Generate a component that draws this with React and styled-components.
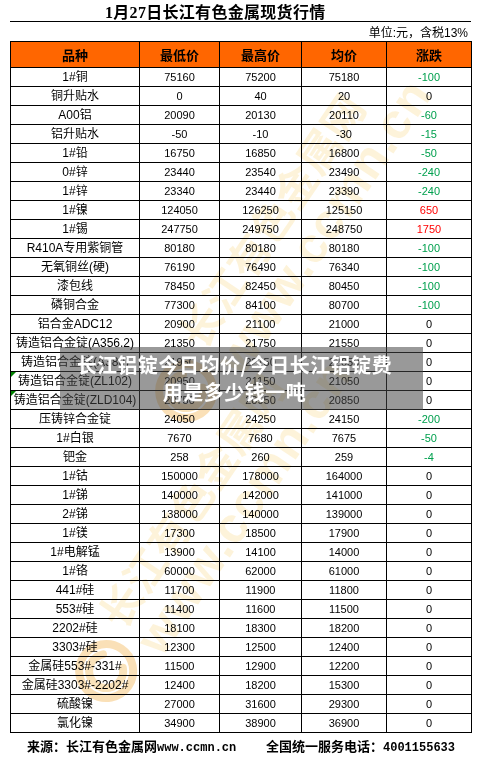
import styled, { createGlobalStyle } from 'styled-components';

const GlobalStyle = createGlobalStyle`
	html, body {
		margin: 0;
		padding: 0;
		background: #fff;
	}
	body {
		font-family: "Liberation Sans", "Noto Sans CJK SC", sans-serif;
		color: #000;
	}
`;

const Page = styled.div`
	position: relative;
	width: 485px;
	height: 757px;
	overflow: hidden;
	background: #fff;
`;

const Sheet = styled.div`
	display: flex;
	flex-direction: column;
	width: 461px;
	margin-left: 10px;
`;

const TitleBar = styled.div`
	display: flex;
	align-items: center;
	height: 21px;
	padding-left: 95px;
	border-bottom: 1px solid #000;
	font-family: "Liberation Serif", "Noto Sans CJK SC", serif;
	font-size: 16px;
	font-weight: 700;
	letter-spacing: 0.3px;
`;

const UnitRow = styled.div`
	display: flex;
	align-items: center;
	justify-content: flex-end;
	height: 19px;
	padding-right: 3px;
	font-size: 12px;
`;

const Table = styled.table`
	width: 461px;
	border-collapse: collapse;
	table-layout: fixed;
`;

const HeadCell = styled.th`
	height: 25px;
	padding: 0;
	border: 1px solid #000;
	background: #ff6600;
	font-family: "Noto Sans CJK SC", sans-serif;
	font-size: 13px;
	font-weight: 700;
`;

const Row = styled.tr`
	height: 19px;
`;

const Cell = styled.td`
	position: relative;
	padding: 0;
	border: 1px solid #000;
	text-align: center;
	white-space: nowrap;
	line-height: 17px;
	font-size: ${props => (props.$name ? '12px' : '11px')};
	color: ${props => props.$tone || '#000'};

	${props =>
		props.$marked &&
		`
		&::before {
			content: '';
			position: absolute;
			left: 0;
			top: 0;
			border-top: 5px solid #008000;
			border-right: 5px solid transparent;
		}
	`}
`;

const Footer = styled.div`
	display: flex;
	align-items: center;
	height: 24px;
	padding: 0 16px 0 17px;
	font-family: "Noto Sans CJK SC", sans-serif;
	font-size: 13px;
	font-weight: 700;
`;

const FooterPart = styled.span`
	display: flex;
	align-items: baseline;
	margin-left: ${props => (props.$right ? 'auto' : '0')};
`;

const Mono = styled.span`
	font-family: "Liberation Mono", monospace;
	font-size: 12px;
	font-weight: 700;
`;

const Watermark = styled.div`
	position: absolute;
	left: ${props => props.$x}px;
	top: ${props => props.$y}px;
	display: flex;
	align-items: center;
	gap: 10px;
	transform: translate(-50%, -50%) rotate(-56deg);
	pointer-events: none;
	mix-blend-mode: multiply;
	color: rgba(248, 206, 100, 0.24);
`;

const MarkText = styled.div`
	display: flex;
	flex-direction: column;
	line-height: 1.05;
	white-space: nowrap;
`;

const MarkCn = styled.span`
	font-family: "Noto Sans CJK SC", sans-serif;
	font-size: 42px;
	font-weight: 700;
`;

const MarkUrl = styled.span`
	font-family: "Liberation Sans", sans-serif;
	font-size: 50px;
	font-weight: 700;
	letter-spacing: 1px;
`;

const Banner = styled.div`
	position: absolute;
	left: 60px;
	top: 347px;
	width: 363px;
	height: 63px;
	box-sizing: border-box;
	padding: 4px 16px 0 2px;
	background: rgba(70, 70, 70, 0.55);
	color: #fff;
	font-family: "Noto Sans CJK SC", sans-serif;
	font-size: 20px;
	font-weight: 700;
	line-height: 27px;
	letter-spacing: 0.5px;
	text-align: center;
`;

const rows = [
	['1#铜', '75160', '75200', '75180', '-100'],
	['铜升贴水', '0', '40', '20', '0'],
	['A00铝', '20090', '20130', '20110', '-60'],
	['铝升贴水', '-50', '-10', '-30', '-15'],
	['1#铅', '16750', '16850', '16800', '-50'],
	['0#锌', '23440', '23540', '23490', '-240'],
	['1#锌', '23340', '23440', '23390', '-240'],
	['1#镍', '124050', '126250', '125150', '650'],
	['1#锡', '247750', '249750', '248750', '1750'],
	['R410A专用紫铜管', '80180', '80180', '80180', '-100'],
	['无氧铜丝(硬)', '76190', '76490', '76340', '-100'],
	['漆包线', '78450', '82450', '80450', '-100'],
	['磷铜合金', '77300', '84100', '80700', '-100'],
	['铝合金ADC12', '20900', '21100', '21000', '0'],
	['铸造铝合金锭(A356.2)', '21350', '21750', '21550', '0'],
	['铸造铝合金锭(A380)', '21950', '22150', '22050', '0'],
	['铸造铝合金锭(ZL102)', '20950', '21150', '21050', '0', true],
	['铸造铝合金锭(ZLD104)', '20750', '20950', '20850', '0', true],
	['压铸锌合金锭', '24050', '24250', '24150', '-200'],
	['1#白银', '7670', '7680', '7675', '-50'],
	['钯金', '258', '260', '259', '-4'],
	['1#钴', '150000', '178000', '164000', '0'],
	['1#锑', '140000', '142000', '141000', '0'],
	['2#锑', '138000', '140000', '139000', '0'],
	['1#镁', '17300', '18500', '17900', '0'],
	['1#电解锰', '13900', '14100', '14000', '0'],
	['1#铬', '60000', '62000', '61000', '0'],
	['441#硅', '11700', '11900', '11800', '0'],
	['553#硅', '11400', '11600', '11500', '0'],
	['2202#硅', '18100', '18300', '18200', '0'],
	['3303#硅', '12300', '12500', '12400', '0'],
	['金属硅553#-331#', '11500', '12900', '12200', '0'],
	['金属硅3303#-2202#', '12400', '18200', '15300', '0'],
	['硫酸镍', '27000', '31600', '29300', '0'],
	['氯化镍', '34900', '38900', '36900', '0'],
];

const toneOf = value => {
	const n = Number(value);
	if (n < 0) return '#00a04e';
	if (n > 0) return '#ff0000';
	return '#000';
};

const Logo = () => (
	<svg width="64" height="64" viewBox="0 0 64 64">
		<circle cx="32" cy="32" r="27" fill="none" stroke="rgba(240,165,50,0.35)" strokeWidth="8" />
		<path
			d="M44 20 A17 17 0 1 0 44 44"
			fill="none"
			stroke="rgba(240,175,60,0.35)"
			strokeWidth="8"
			strokeLinecap="round"
		/>
	</svg>
);

const MarkBlock = ({ x, y }) => (
	<Watermark $x={x} $y={y}>
		<Logo />
		<MarkText>
			<MarkCn>长江有色金属网</MarkCn>
			<MarkUrl>www.ccmn.cn</MarkUrl>
		</MarkText>
	</Watermark>
);

const App = () => {
	return (
		<>
			<GlobalStyle />
			<Page>
				<Sheet>
					<TitleBar>1月27日长江有色金属现货行情</TitleBar>
					<UnitRow>单位:元，含税13%</UnitRow>
					<Table>
						<colgroup>
							<col style={{ width: 129 }} />
							<col style={{ width: 80 }} />
							<col style={{ width: 82 }} />
							<col style={{ width: 85 }} />
							<col style={{ width: 85 }} />
						</colgroup>
						<thead>
							<tr>
								<HeadCell>品种</HeadCell>
								<HeadCell>最低价</HeadCell>
								<HeadCell>最高价</HeadCell>
								<HeadCell>均价</HeadCell>
								<HeadCell>涨跌</HeadCell>
							</tr>
						</thead>
						<tbody>
							{rows.map(([name, low, high, avg, change, marked]) => (
								<Row key={name}>
									<Cell $name $marked={marked}>
										{name}
									</Cell>
									<Cell>{low}</Cell>
									<Cell>{high}</Cell>
									<Cell>{avg}</Cell>
									<Cell $tone={toneOf(change)}>{change}</Cell>
								</Row>
							))}
						</tbody>
					</Table>
					<Footer>
						<FooterPart>
							来源：长江有色金属网<Mono>www.ccmn.cn</Mono>
						</FooterPart>
						<FooterPart $right>
							全国统一服务电话：<Mono>4001155633</Mono>
						</FooterPart>
					</Footer>
				</Sheet>
				<MarkBlock x={285} y={245} />
				<MarkBlock x={205} y={525} />
				<Banner>
					长江铝锭今日均价/今日长江铝锭费
					<br />
					用是多少钱一吨
				</Banner>
			</Page>
		</>
	);
};

export default App;
